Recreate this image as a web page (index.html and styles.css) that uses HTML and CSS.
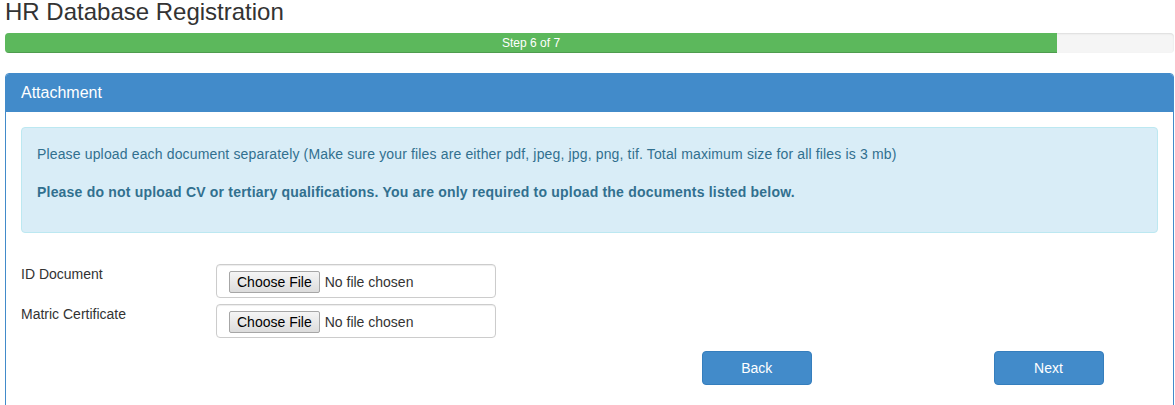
FILE: index.html
```html
<!DOCTYPE html>
<html lang="en">
<head>
  <meta charset="UTF-8">
  <title>HR Database Registration</title>
  <link rel="stylesheet" href="styles.css">
</head>
<body>
  <div class="page">
    <h1 class="page-title">HR Database Registration</h1>

    <div class="progress">
      <div class="progress-bar" style="width: 90%;">Step 6 of 7</div>
    </div>

    <div class="panel">
      <div class="panel-heading">Attachment</div>
      <div class="panel-body">
        <div class="alert">
          <p>Please upload each document separately (Make sure your files are either pdf, jpeg, jpg, png, tif. Total maximum size for all files is 3 mb)</p>
          <p class="strong">Please do not upload CV or tertiary qualifications. You are only required to upload the documents listed below.</p>
        </div>

        <form class="upload-form">
          <div class="form-group">
            <label for="id-doc">ID Document</label>
            <div class="form-control"><input type="file" id="id-doc"></div>
          </div>
          <div class="form-group">
            <label for="matric">Matric Certificate</label>
            <div class="form-control"><input type="file" id="matric"></div>
          </div>

          <div class="button-row">
            <button type="button" class="btn btn-back">Back</button>
            <button type="button" class="btn btn-next">Next</button>
          </div>
        </form>
      </div>
    </div>
  </div>
</body>
</html>
```

FILE: styles.css
```css
/* Basic reset */
* {
  margin: 0;
  padding: 0;
  box-sizing: border-box;
}

body {
  font-family: "Liberation Sans", Arial, sans-serif;
  font-size: 14px;
  line-height: 20px;
  color: #333;
  background: #fff;
}

.page {
  padding: 0 1px 0 5px;
}

/* Title */
.page-title {
  font-size: 24px;
  font-weight: normal;
  line-height: 24px;
  margin: 0 0 9px;
  color: #333;
}

/* Progress bar */
.progress {
  height: 20px;
  margin-bottom: 20px;
  background: #f5f5f5;
  border-radius: 4px;
  overflow: hidden;
  box-shadow: inset 0 1px 2px rgba(0, 0, 0, 0.1);
}
.progress-bar {
  height: 100%;
  background: #5cb85c;
  color: #fff;
  font-size: 12px;
  line-height: 20px;
  text-align: center;
  box-shadow: inset 0 -1px 0 rgba(0, 0, 0, 0.15);
}

/* Panel */
.panel {
  border: 1px solid #428bca;
  border-radius: 4px;
  height: 340px;
}
.panel-heading {
  background: #428bca;
  color: #fff;
  font-size: 16px;
  line-height: 1.1;
  padding: 10px 15px;
  border-radius: 3px 3px 0 0;
}
.panel-body {
  padding: 15px;
}

/* Info alert */
.alert {
  background: #d9edf7;
  border: 1px solid #bce8f1;
  border-radius: 4px;
  color: #31708f;
  padding: 16px 15px 15px;
  margin-bottom: 31px;
}
.alert p {
  margin-bottom: 18px;
  letter-spacing: 0.15px;
}
.alert p.strong {
  font-weight: bold;
  letter-spacing: 0.2px;
  margin-bottom: 15px;
}

/* Form rows */
.form-group {
  display: grid;
  grid-template-columns: 195px 280px;
  margin-bottom: 6px;
}
.form-group label {
  font-weight: normal;
}
.form-control {
  height: 34px;
  padding: 6px 12px;
  border: 1px solid #ccc;
  border-radius: 4px;
  box-shadow: inset 0 1px 1px rgba(0, 0, 0, 0.075);
}
.form-control input {
  font-family: "Liberation Sans", Arial, sans-serif;
  font-size: 14px;
  color: #333;
  width: 100%;
  line-height: 20px;
}
.form-control input::file-selector-button {
  font-family: "Liberation Sans", Arial, sans-serif;
  font-size: 14px;
  color: #000;
  height: 22px;
  padding: 0 7px;
  margin-right: 5px;
  border: 1px solid #a6a6a6;
  border-radius: 2px;
  background: linear-gradient(#f5f5f5, #dcdcdc);
}

/* Navigation buttons */
.button-row {
  display: grid;
  grid-template-columns: repeat(12, minmax(0, 1fr));
  margin: 13px -15px 0;
}
.btn {
  width: 110px;
  height: 34px;
  margin-left: 15px;
  font-family: "Liberation Sans", Arial, sans-serif;
  font-size: 14px;
  color: #fff;
  background: #428bca;
  border: 1px solid #357ebd;
  border-radius: 4px;
  cursor: pointer;
}
.btn-back {
  grid-column: 8;
}
.btn-next {
  grid-column: 11;
}
```
